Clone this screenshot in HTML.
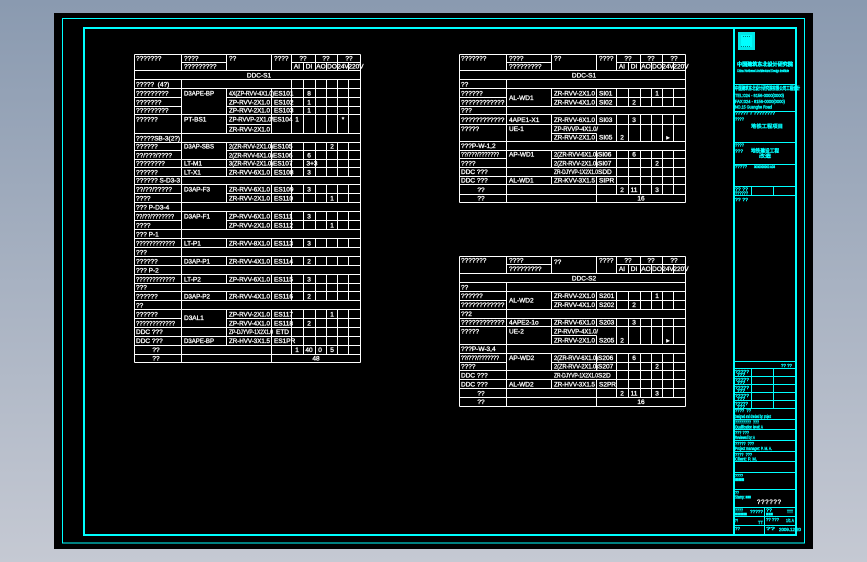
<!DOCTYPE html>
<html><head><meta charset="utf-8"><style>
html,body{margin:0;padding:0;width:867px;height:562px;overflow:hidden;background:linear-gradient(180deg,#8a9ab0 0%,#c5c9d3 100%)}
svg{position:absolute;left:0;top:0;display:block}
text{font-family:"Liberation Sans","Noto Sans CJK SC",sans-serif;white-space:pre}
.w text{font-size:6.5px;fill:#fff;stroke:#fff;stroke-width:.32}
.w .c{text-anchor:middle}
.l{fill:none;stroke:#fff;stroke-width:1;shape-rendering:crispEdges}
.k{fill:none;stroke:#00ffff;stroke-width:1;shape-rendering:crispEdges}
.t text{font-size:4.8px;fill:#00ffff;stroke:#00ffff;stroke-width:.4}
</style></head><body>
<svg width="867" height="562" viewBox="0 0 867 562" xmlns="http://www.w3.org/2000/svg">
<rect x="54" y="13" width="759" height="536" fill="#000"/>
<rect x="62.5" y="18.5" width="742" height="524.5" class="k"/>
<rect x="84" y="28" width="712" height="507" fill="none" stroke="#00ffff" stroke-width="2" shape-rendering="crispEdges"/>
<path d="M734 27.500V534.500" stroke="#00ffff" stroke-width="2" shape-rendering="crispEdges"/>

<!-- Title block lines -->
<path class="k" d="M734 84.500H795M734 111.500H795M734 142.500H795M734 164.500H795M734 186.500H795M734 195.500H795M751.500 186.500V195.500M773.500 186.500V195.500
M734 361.500H795M734 368.500H795M734 376.500H795M734 384.500H795M734 392.500H795M734 400.500H795M734 408.500H795M734 419.500H795M734 429.500H795M734 440.500H795M734 451.500H795M734 461.500H795M734 472.500H795M734 489.500H795M734 507.500H795M734 516.500H795M734 525.500H795M751.500 368.500V408.500M773.500 368.500V408.500M764.500 507.500V534.500"/>
<rect x="738" y="32" width="17" height="18" fill="#00e8e8"/>
<rect x="741" y="35" width="11" height="12" fill="#00ffff"/>
<path d="M743 36.500h1M745 36.500h1M747 36.500h1M749 36.500h1M743 46.500h1M745 46.500h1M747 46.500h1M749 46.500h1M741 46.500h1" stroke="#007a7a" stroke-width="1" shape-rendering="crispEdges"/>

<g class="t">
<text x="737" y="66" style="font-size:5.1px;stroke-width:.6" textLength="56" lengthAdjust="spacingAndGlyphs">中国建筑东北设计研究院</text>
<text x="737" y="72" style="font-size:3.6px;stroke-width:.4" textLength="52" lengthAdjust="spacingAndGlyphs">China Northeast Architectural Design Institute</text>
<text x="735" y="90" style="font-size:5px;stroke-width:.5" textLength="65" lengthAdjust="spacingAndGlyphs">中国建筑东北设计研究院有限公司工程设计</text>
<text x="735" y="97" textLength="49" lengthAdjust="spacingAndGlyphs">TEL:024 - 8156-0000(0000)</text>
<text x="735" y="103" textLength="50" lengthAdjust="spacingAndGlyphs">FAX:024 - 8156-0000(0000)</text>
<text x="735" y="108.500" textLength="37" lengthAdjust="spacingAndGlyphs">NO.15 Guanghe Road</text>
<text x="735" y="114.500" textLength="40" lengthAdjust="spacingAndGlyphs">????? ? ????????</text>
<text x="735" y="120.500" textLength="9" lengthAdjust="spacingAndGlyphs">????</text>
<text x="751" y="128" style="font-size:5.200px;stroke-width:.4" textLength="32" lengthAdjust="spacingAndGlyphs">地铁工程项目</text>
<text x="735" y="146.500" textLength="9" lengthAdjust="spacingAndGlyphs">????</text>
<text x="735" y="152.500" textLength="8" lengthAdjust="spacingAndGlyphs">???</text>
<text x="751" y="152.500" style="font-size:5.200px;stroke-width:.4" textLength="28" lengthAdjust="spacingAndGlyphs">地铁建设工程</text>
<text x="759" y="157.500" style="font-size:4.800px;stroke-width:.4" textLength="12" lengthAdjust="spacingAndGlyphs">改造</text>
<text x="735" y="168" textLength="12" lengthAdjust="spacingAndGlyphs">?????</text>
<text x="754" y="168" style="font-size:3.6px;stroke-width:.5" textLength="21" lengthAdjust="spacingAndGlyphs">3000000000 A03</text>
<text x="735" y="190.500" textLength="13" lengthAdjust="spacingAndGlyphs">?? ??</text>
<text x="735" y="194.500" textLength="13" lengthAdjust="spacingAndGlyphs">??????</text>
<text x="735" y="201" textLength="13" lengthAdjust="spacingAndGlyphs">?? ??</text>
<text x="781" y="367" textLength="11" lengthAdjust="spacingAndGlyphs">?? ??</text>
<text x="735" y="373" textLength="14" lengthAdjust="spacingAndGlyphs">?????</text>
<text x="737" y="376" textLength="8" lengthAdjust="spacingAndGlyphs">???</text>
<text x="735" y="381" textLength="14" lengthAdjust="spacingAndGlyphs">?????</text>
<text x="737" y="384" textLength="8" lengthAdjust="spacingAndGlyphs">???</text>
<text x="735" y="389" textLength="14" lengthAdjust="spacingAndGlyphs">?????</text>
<text x="737" y="392" textLength="8" lengthAdjust="spacingAndGlyphs">???</text>
<text x="735" y="397" textLength="14" lengthAdjust="spacingAndGlyphs">?????</text>
<text x="737" y="400" textLength="8" lengthAdjust="spacingAndGlyphs">???</text>
<text x="735" y="405" textLength="13" lengthAdjust="spacingAndGlyphs">?????</text>
<text x="737" y="408" textLength="8" lengthAdjust="spacingAndGlyphs">???</text>
<text x="735" y="412" textLength="16" lengthAdjust="spacingAndGlyphs">????  ??</text>
<text x="735" y="418" textLength="36" lengthAdjust="spacingAndGlyphs">Designed and checked by: project</text>
<text x="735" y="423.500" textLength="24" lengthAdjust="spacingAndGlyphs">????????  ???</text>
<text x="735" y="428.500" textLength="28" lengthAdjust="spacingAndGlyphs">Qualification level: A</text>
<text x="735" y="434" textLength="14" lengthAdjust="spacingAndGlyphs">??? ???</text>
<text x="735" y="439" textLength="20" lengthAdjust="spacingAndGlyphs">Reviewed by: A</text>
<text x="735" y="445" textLength="19" lengthAdjust="spacingAndGlyphs">?????  ???</text>
<text x="735" y="450" textLength="37" lengthAdjust="spacingAndGlyphs">Project manager: P. M. A.</text>
<text x="735" y="456" textLength="17" lengthAdjust="spacingAndGlyphs">????  ???</text>
<text x="735" y="460.500" textLength="22" lengthAdjust="spacingAndGlyphs">Client: P. M.</text>
<text x="735" y="477" textLength="8" lengthAdjust="spacingAndGlyphs">????</text>
<text x="735" y="481" style="font-size:5px;stroke-width:.5" textLength="9" lengthAdjust="spacingAndGlyphs">■■■</text>
<text x="735" y="494" textLength="4" lengthAdjust="spacingAndGlyphs">??</text>
<text x="735" y="498.500" textLength="16" lengthAdjust="spacingAndGlyphs">Stamp: ■■■</text>
<text x="735" y="511.500" textLength="8" lengthAdjust="spacingAndGlyphs">????</text>
<text x="750" y="513" textLength="13" lengthAdjust="spacingAndGlyphs">?????</text>
<text x="766" y="511.500" textLength="6" lengthAdjust="spacingAndGlyphs">??</text>
<text x="787" y="513" textLength="6" lengthAdjust="spacingAndGlyphs">TTT</text>
<text x="735" y="515.500" textLength="12" lengthAdjust="spacingAndGlyphs">■■■■</text>
<text x="766" y="515.500" textLength="7" lengthAdjust="spacingAndGlyphs">■■■</text>
<text x="735" y="522" textLength="3" lengthAdjust="spacingAndGlyphs">??</text>
<text x="758" y="524" textLength="5" lengthAdjust="spacingAndGlyphs">TT</text>
<text x="766" y="521" textLength="13" lengthAdjust="spacingAndGlyphs">?? ???</text>
<text x="786" y="522" textLength="8" lengthAdjust="spacingAndGlyphs">1/1 A</text>
<text x="735" y="530" textLength="5" lengthAdjust="spacingAndGlyphs">??</text>
<text x="766" y="530" textLength="9" lengthAdjust="spacingAndGlyphs">??</text>
<text x="779" y="531" style="font-size:4.6px" textLength="22" lengthAdjust="spacingAndGlyphs">2009.12 20</text>
</g>
<text x="757" y="504" style="font-size:6px;fill:#fff;stroke:#fff;stroke-width:.35;letter-spacing:.8px">??????</text>

<!-- TABLE 1 -->
<path class="l" d="M134.500 54.500H360.500M181.500 62.500H226.500M291.500 62.500H360.500M134.500 70.500H360.500M134.500 79.500H360.500M134.500 88.500H360.500M134.500 97.500H181.500M226.500 97.500H360.500M134.500 106.500H181.500M226.500 106.500H360.500M134.500 114.500H360.500M226.500 124.500H271.500M134.500 133.500H360.500M134.500 142.500H360.500M134.500 150.500H181.500M226.500 150.500H360.500M134.500 159.500H360.500M134.500 167.500H360.500M134.500 176.500H360.500M134.500 184.500H360.500M134.500 193.500H181.500M226.500 193.500H360.500M134.500 202.500H360.500M134.500 211.500H360.500M134.500 220.500H181.500M226.500 220.500H360.500M134.500 229.500H360.500M134.500 238.500H360.500M134.500 247.500H360.500M134.500 256.500H360.500M134.500 265.500H360.500M134.500 274.500H360.500M134.500 283.500H360.500M134.500 291.500H360.500M134.500 300.500H360.500M134.500 309.500H360.500M134.500 318.500H181.500M226.500 318.500H360.500M134.500 327.500H360.500M134.500 336.500H360.500M134.500 345.500H360.500M134.500 354.500H360.500M134.500 362.500H360.500
M134.500 54.500V362.500M360.500 54.500V362.500M181.500 54.500V70.500M181.500 79.500V362.500
M226.500 54.500V70.500M226.500 88.500V133.500M226.500 142.500V176.500M226.500 184.500V202.500M226.500 211.500V229.500M226.500 238.500V247.500M226.500 256.500V265.500M226.500 274.500V283.500M226.500 291.500V300.500M226.500 309.500V345.500
M271.500 54.500V70.500M271.500 88.500V133.500M271.500 142.500V176.500M271.500 184.500V202.500M271.500 211.500V229.500M271.500 238.500V247.500M271.500 256.500V265.500M271.500 274.500V283.500M271.500 291.500V300.500M271.500 309.500V362.500"/>
<g class="l">
<path id="a" d="M291.500 79.500V133.500M291.500 142.500V176.500M291.500 184.500V202.500M291.500 211.500V229.500M291.500 238.500V247.500M291.500 256.500V265.500M291.500 274.500V300.500M291.500 309.500V354.500"/>
<path d="M291.500 54.500V70.500M315.500 54.500V70.500M337.500 54.500V70.500M303.500 62.500V70.500M326.500 62.500V70.500M348.500 62.500V70.500"/>
<use href="#a" x="12"/><use href="#a" x="24"/><use href="#a" x="35"/><use href="#a" x="46"/><use href="#a" x="57"/>
</g>
<g class="w">
<text x="136" y="60.500">???????</text><text x="184" y="60.500">????</text><text x="229" y="60.500">??</text><text x="274" y="60.500">????</text><text class="c" x="303" y="60.500">??</text><text class="c" x="326" y="60.500">??</text><text class="c" x="349" y="60.500">??</text>
<text x="184" y="68.500">?????????</text><text class="c" x="297" y="68.500">AI</text><text class="c" x="309" y="68.500">DI</text><text class="c" x="321" y="68.500">AO</text><text class="c" x="332" y="68.500">DO</text><text class="c" x="343" y="68.500">24V</text><text class="c" x="356" y="68.500">220V</text>
<text class="c" x="259" y="77.500">DDC-S1</text>
<text x="136" y="86.500">?????  (4?)</text>
<text x="136" y="95.500">?????????</text><text x="184" y="95.500" textLength="30" lengthAdjust="spacingAndGlyphs">D3APE-BP</text><text x="229" y="95.500" textLength="45" lengthAdjust="spacingAndGlyphs">4X(ZP-RVV-4X1.0)</text><text x="274" y="95.500">ES101</text><text class="c" x="309" y="95.500">8</text>
<text x="136" y="104.500">???????</text><text x="229" y="104.500" textLength="41" lengthAdjust="spacingAndGlyphs">ZP-RVV-2X1.0</text><text x="274" y="104.500">ES102</text><text class="c" x="309" y="104.500">1</text>
<text x="136" y="112.500">?????????</text><text x="229" y="112.500" textLength="41" lengthAdjust="spacingAndGlyphs">ZP-RVV-2X1.0</text><text x="274" y="112.500">ES103</text><text class="c" x="309" y="112.500">1</text>
<text x="136" y="121.500">??????</text><text x="184" y="121.500">PT-BS1</text><text x="229" y="121.500" textLength="44" lengthAdjust="spacingAndGlyphs">ZP-RVVP-2X1.0/</text><text x="273" y="121.500">ES104</text><text class="c" x="297" y="121.500">1</text><text class="c" x="343" y="121.500">*</text>
<text x="229" y="131.500" textLength="41" lengthAdjust="spacingAndGlyphs">ZR-RVV-2X1.0</text>
<text x="136" y="140.500">?????SB-3(2?)</text>
<text x="136" y="148.500">??????</text><text x="184" y="148.500" textLength="30" lengthAdjust="spacingAndGlyphs">D3AP-SBS</text><text x="229" y="148.500" textLength="44" lengthAdjust="spacingAndGlyphs">2(ZR-RVV-2X1.0)</text><text x="273" y="148.500">ES105</text><text class="c" x="332" y="148.500">2</text>
<text x="136" y="157.500" textLength="36" lengthAdjust="spacingAndGlyphs">??/???/????</text><text x="229" y="157.500" textLength="44" lengthAdjust="spacingAndGlyphs">2(ZR-RVV-6X1.0)</text><text x="273" y="157.500">ES106</text><text class="c" x="309" y="157.500">6</text>
<text x="136" y="165.500">????????</text><text x="184" y="165.500">LT-M1</text><text x="229" y="165.500" textLength="44" lengthAdjust="spacingAndGlyphs">3(ZR-RVV-2X1.0)</text><text x="273" y="165.500">ES107</text><text class="c" x="312" y="165.500">3+3</text>
<text x="136" y="174.500">??????</text><text x="184" y="174.500">LT-X1</text><text x="229" y="174.500" textLength="41" lengthAdjust="spacingAndGlyphs">ZR-RVV-6X1.0</text><text x="274" y="174.500">ES108</text><text class="c" x="309" y="174.500">3</text>
<text x="136" y="182.500">?????? S-D3-3</text>
<text x="136" y="191.500" textLength="36" lengthAdjust="spacingAndGlyphs">??/??/?????</text><text x="184" y="191.500" textLength="26" lengthAdjust="spacingAndGlyphs">D3AP-F3</text><text x="229" y="191.500" textLength="41" lengthAdjust="spacingAndGlyphs">ZR-RVV-6X1.0</text><text x="274" y="191.500">ES109</text><text class="c" x="309" y="191.500">3</text>
<text x="136" y="200.500">????</text><text x="229" y="200.500" textLength="41" lengthAdjust="spacingAndGlyphs">ZR-RVV-2X1.0</text><text x="274" y="200.500">ES110</text><text class="c" x="332" y="200.500">1</text>
<text x="136" y="209.500">??? P-D3-4</text>
<text x="136" y="218.500" textLength="38" lengthAdjust="spacingAndGlyphs">??/??/???????</text><text x="184" y="218.500" textLength="26" lengthAdjust="spacingAndGlyphs">D3AP-F1</text><text x="229" y="218.500" textLength="41" lengthAdjust="spacingAndGlyphs">ZP-RVV-6X1.0</text><text x="274" y="218.500">ES111</text><text class="c" x="309" y="218.500">3</text>
<text x="136" y="227.500">????</text><text x="229" y="227.500" textLength="41" lengthAdjust="spacingAndGlyphs">ZP-RVV-2X1.0</text><text x="274" y="227.500">ES112</text><text class="c" x="332" y="227.500">1</text>
<text x="136" y="236.500">??? P-1</text>
<text x="136" y="245.500" textLength="39" lengthAdjust="spacingAndGlyphs">????????????</text><text x="184" y="245.500">LT-P1</text><text x="229" y="245.500" textLength="41" lengthAdjust="spacingAndGlyphs">ZR-RVV-8X1.0</text><text x="274" y="245.500">ES113</text><text class="c" x="309" y="245.500">3</text>
<text x="136" y="254.500">???</text>
<text x="136" y="263.500">??????</text><text x="184" y="263.500" textLength="26" lengthAdjust="spacingAndGlyphs">D3AP-P1</text><text x="229" y="263.500" textLength="41" lengthAdjust="spacingAndGlyphs">ZR-RVV-4X1.0</text><text x="274" y="263.500">ES114</text><text class="c" x="309" y="263.500">2</text>
<text x="136" y="272.500">??? P-2</text>
<text x="136" y="281.500" textLength="39" lengthAdjust="spacingAndGlyphs">????????????</text><text x="184" y="281.500">LT-P2</text><text x="229" y="281.500" textLength="41" lengthAdjust="spacingAndGlyphs">ZP-RVV-6X1.0</text><text x="274" y="281.500">ES115</text><text class="c" x="309" y="281.500">3</text>
<text x="136" y="289.500">???</text>
<text x="136" y="298.500">??????</text><text x="184" y="298.500" textLength="26" lengthAdjust="spacingAndGlyphs">D3AP-P2</text><text x="229" y="298.500" textLength="41" lengthAdjust="spacingAndGlyphs">ZR-RVV-4X1.0</text><text x="274" y="298.500">ES116</text><text class="c" x="309" y="298.500">2</text>
<text x="136" y="307.500">??</text>
<text x="136" y="316.500">??????</text><text x="184" y="320">D3AL1</text><text x="229" y="316.500" textLength="41" lengthAdjust="spacingAndGlyphs">ZP-RVV-2X1.0</text><text x="274" y="316.500">ES117</text><text class="c" x="332" y="316.500">1</text>
<text x="136" y="325.500" textLength="39" lengthAdjust="spacingAndGlyphs">????????????</text><text x="229" y="325.500" textLength="41" lengthAdjust="spacingAndGlyphs">ZP-RVV-4X1.0</text><text x="274" y="325.500">ES118</text><text class="c" x="309" y="325.500">2</text>
<text x="136" y="334">DDC ???</text><text x="229" y="334" textLength="44" lengthAdjust="spacingAndGlyphs">ZP-DJYVP-1X2X1.0</text><text x="276" y="334">ETD</text>
<text x="136" y="343">DDC ???</text><text x="184" y="343" textLength="30" lengthAdjust="spacingAndGlyphs">D3APE-BP</text><text x="229" y="343" textLength="41" lengthAdjust="spacingAndGlyphs">ZR-HVV-3X1.5</text><text x="274" y="343">ES1PR</text>
<text class="c" x="156" y="352">??</text><text class="c" x="297" y="352">1</text><text class="c" x="309" y="352">40</text><text class="c" x="320" y="352">0</text><text class="c" x="332" y="352">5</text>
<text class="c" x="156" y="360.500">??</text><text class="c" x="316" y="360.500">48</text>
</g>

<!-- TABLE 2 -->
<g id="t2">
<path class="l" d="M459.500 54.500H685.500M506.500 62.500H551.500M616.500 62.500H685.500M459.500 70.500H685.500M459.500 79.500H685.500M459.500 88.500H685.500M459.500 97.500H506.500M551.500 97.500H685.500M459.500 106.500H685.500M459.500 114.500H685.500M459.500 124.500H685.500M551.500 133.500H596.500M459.500 141.500H685.500M459.500 150.500H685.500M459.500 158.500H506.500M551.500 158.500H685.500M459.500 167.500H685.500M459.500 176.500H685.500M459.500 184.500H685.500M459.500 194.500H685.500M459.500 202.500H685.500
M459.500 54.500V202.500M685.500 54.500V202.500M506.500 54.500V70.500M506.500 79.500V202.500
M551.500 54.500V70.500M551.500 88.500V106.500M551.500 114.500V141.500M551.500 150.500V167.500M551.500 176.500V184.500
M596.500 54.500V70.500M596.500 88.500V106.500M596.500 114.500V124.500M596.500 133.500V141.500M596.500 150.500V167.500M596.500 176.500V202.500
M616.500 54.500V70.500M640.500 54.500V70.500M662.500 54.500V70.500M628.500 62.500V70.500M651.500 62.500V70.500M673.500 62.500V70.500"/>
<g class="l">
<path id="b" d="M616.500 88.500V106.500M616.500 114.500V141.500M616.500 150.500V194.500"/>
<use href="#b" x="12"/><use href="#b" x="24"/><use href="#b" x="35"/><use href="#b" x="46"/><use href="#b" x="57"/>
</g>
<g class="w">
<text x="461" y="60.500">???????</text><text x="509" y="60.500">????</text><text x="554" y="60.500">??</text><text x="599" y="60.500">????</text><text class="c" x="628" y="60.500">??</text><text class="c" x="651" y="60.500">??</text><text class="c" x="674" y="60.500">??</text>
<text x="509" y="68.500">?????????</text><text class="c" x="622" y="68.500">AI</text><text class="c" x="634" y="68.500">DI</text><text class="c" x="646" y="68.500">AO</text><text class="c" x="657" y="68.500">DO</text><text class="c" x="668" y="68.500">24V</text><text class="c" x="681" y="68.500">220V</text>
<text class="c" x="584" y="77.500">DDC-S1</text>
<text x="461" y="86.500">??</text>
<text x="461" y="95.500">??????</text><text x="509" y="100">AL-WD1</text><text x="554" y="95.500" textLength="41" lengthAdjust="spacingAndGlyphs">ZR-RVV-2X1.0</text><text x="599" y="95.500">SI01</text><text class="c" x="657" y="95.500">1</text>
<text x="461" y="104.500">????????????</text><text x="554" y="104.500" textLength="41" lengthAdjust="spacingAndGlyphs">ZR-RVV-4X1.0</text><text x="599" y="104.500">SI02</text><text class="c" x="634" y="104.500">2</text>
<text x="461" y="112.500">???</text>
<text x="461" y="122">????????????</text><text x="509" y="122">4APE1-X1</text><text x="554" y="122" textLength="41" lengthAdjust="spacingAndGlyphs">ZR-RVV-6X1.0</text><text x="599" y="122">SI03</text><text class="c" x="634" y="122">3</text>
<text x="461" y="131">?????</text><text x="509" y="131">UE-1</text><text x="554" y="131" textLength="44" lengthAdjust="spacingAndGlyphs">ZP-RVVP-4X1.0/</text>
<text x="554" y="139.500" textLength="41" lengthAdjust="spacingAndGlyphs">ZR-RVV-2X1.0</text><text x="599" y="139.500">SI05</text><text class="c" x="622" y="139.500">2</text><text class="c" x="668" y="139.500">▸</text>
<text x="461" y="148">???P-W-1,2</text>
<text x="461" y="156.500" textLength="38" lengthAdjust="spacingAndGlyphs">??/???/???????</text><text x="509" y="156.500">AP-WD1</text><text x="554" y="156.500" textLength="44" lengthAdjust="spacingAndGlyphs">2(ZR-RVV-6X1.0)</text><text x="598" y="156.500">SI06</text><text class="c" x="634" y="156.500">6</text>
<text x="461" y="165.500">????</text><text x="554" y="165.500" textLength="44" lengthAdjust="spacingAndGlyphs">2(ZR-RVV-2X1.0)</text><text x="598" y="165.500">SI07</text><text class="c" x="657" y="165.500">2</text>
<text x="461" y="174">DDC ???</text><text x="554" y="174" textLength="44" lengthAdjust="spacingAndGlyphs">ZR-DJYVP-1X2X1.0</text><text x="598" y="174">SDD</text>
<text x="461" y="182.500">DDC ???</text><text x="509" y="182.500">AL-WD1</text><text x="554" y="182.500" textLength="41" lengthAdjust="spacingAndGlyphs">ZR-KVV-3X1.5</text><text x="599" y="182.500">SIPR</text>
<text class="c" x="481" y="192">??</text><text class="c" x="622" y="192">2</text><text class="c" x="634" y="192">11</text><text class="c" x="657" y="192">3</text>
<text class="c" x="481" y="200.500">??</text><text class="c" x="641" y="200.500">16</text>
</g>
</g>

<!-- TABLE 3 -->
<path class="l" d="M459.500 256.500H685.500M506.500 264.500H551.500M616.500 264.500H685.500M459.500 273.500H685.500M459.500 282.500H685.500M459.500 291.500H685.500M459.500 300.500H506.500M551.500 300.500H685.500M459.500 309.500H685.500M459.500 318.500H685.500M459.500 326.500H685.500M551.500 335.500H596.500M459.500 344.500H685.500M459.500 353.500H685.500M459.500 362.500H506.500M551.500 362.500H685.500M459.500 370.500H685.500M459.500 379.500H685.500M459.500 388.500H685.500M459.500 397.500H685.500M459.500 406.500H685.500
M459.500 256.500V406.500M685.500 256.500V406.500M506.500 256.500V273.500M506.500 282.500V406.500
M551.500 256.500V273.500M551.500 291.500V309.500M551.500 318.500V344.500M551.500 353.500V370.500M551.500 379.500V388.500
M596.500 256.500V273.500M596.500 291.500V309.500M596.500 318.500V326.500M596.500 335.500V344.500M596.500 353.500V370.500M596.500 379.500V406.500
M616.500 256.500V273.500M640.500 256.500V273.500M662.500 256.500V273.500M628.500 264.500V273.500M651.500 264.500V273.500M673.500 264.500V273.500"/>
<g class="l">
<path id="d" d="M616.500 291.500V309.500M616.500 318.500V344.500M616.500 353.500V397.500"/>
<use href="#d" x="12"/><use href="#d" x="24"/><use href="#d" x="35"/><use href="#d" x="46"/><use href="#d" x="57"/>
</g>
<g class="w">
<text x="461" y="262.500">???????</text><text x="509" y="262.500">????</text><text x="554" y="264">??</text><text x="599" y="262.500">????</text><text class="c" x="628" y="262.500">??</text><text class="c" x="651" y="262.500">??</text><text class="c" x="674" y="262.500">??</text>
<text x="509" y="271">?????????</text><text class="c" x="622" y="271">AI</text><text class="c" x="634" y="271">DI</text><text class="c" x="646" y="271">AO</text><text class="c" x="657" y="271">DO</text><text class="c" x="668" y="271">24V</text><text class="c" x="681" y="271">220V</text>
<text class="c" x="584" y="280.500">DDC-S2</text>
<text x="461" y="289.500">??</text>
<text x="461" y="298">??????</text><text x="509" y="302.500">AL-WD2</text><text x="554" y="298" textLength="41" lengthAdjust="spacingAndGlyphs">ZR-RVV-2X1.0</text><text x="599" y="298">S201</text><text class="c" x="657" y="298">1</text>
<text x="461" y="307">????????????</text><text x="554" y="307" textLength="41" lengthAdjust="spacingAndGlyphs">ZR-RVV-4X1.0</text><text x="599" y="307">S202</text><text class="c" x="634" y="307">2</text>
<text x="461" y="316">??2</text>
<text x="461" y="324.500">????????????</text><text x="509" y="324.500">4APE2-1o</text><text x="554" y="324.500" textLength="41" lengthAdjust="spacingAndGlyphs">ZR-RVV-6X1.0</text><text x="599" y="324.500">S203</text><text class="c" x="634" y="324.500">3</text>
<text x="461" y="333.500">?????</text><text x="509" y="333.500">UE-2</text><text x="554" y="333.500" textLength="44" lengthAdjust="spacingAndGlyphs">ZP-RVVP-4X1.0/</text>
<text x="554" y="342.500" textLength="41" lengthAdjust="spacingAndGlyphs">ZR-RVV-2X1.0</text><text x="599" y="342.500">S205</text><text class="c" x="622" y="342.500">2</text><text class="c" x="668" y="342.500">▸</text>
<text x="461" y="351">???P-W-3,4</text>
<text x="461" y="360" textLength="38" lengthAdjust="spacingAndGlyphs">??/???/???????</text><text x="509" y="360">AP-WD2</text><text x="554" y="360" textLength="44" lengthAdjust="spacingAndGlyphs">2(ZR-RVV-6X1.0)</text><text x="598" y="360">S206</text><text class="c" x="634" y="360">6</text>
<text x="461" y="368.500">????</text><text x="554" y="368.500" textLength="44" lengthAdjust="spacingAndGlyphs">2(ZR-RVV-2X1.0)</text><text x="598" y="368.500">S207</text><text class="c" x="657" y="368.500">2</text>
<text x="461" y="377.500">DDC ???</text><text x="554" y="377.500" textLength="44" lengthAdjust="spacingAndGlyphs">ZR-DJYVP-1X2X1.0</text><text x="598" y="377.500">S2D</text>
<text x="461" y="386.500">DDC ???</text><text x="509" y="386.500">AL-WD2</text><text x="554" y="386.500" textLength="41" lengthAdjust="spacingAndGlyphs">ZR-HVV-3X1.5</text><text x="599" y="386.500">S2PR</text>
<text class="c" x="481" y="395.500">??</text><text class="c" x="622" y="395.500">2</text><text class="c" x="634" y="395.500">11</text><text class="c" x="657" y="395.500">3</text>
<text class="c" x="481" y="404">??</text><text class="c" x="641" y="404">16</text>
</g>
</svg>
</body></html>
